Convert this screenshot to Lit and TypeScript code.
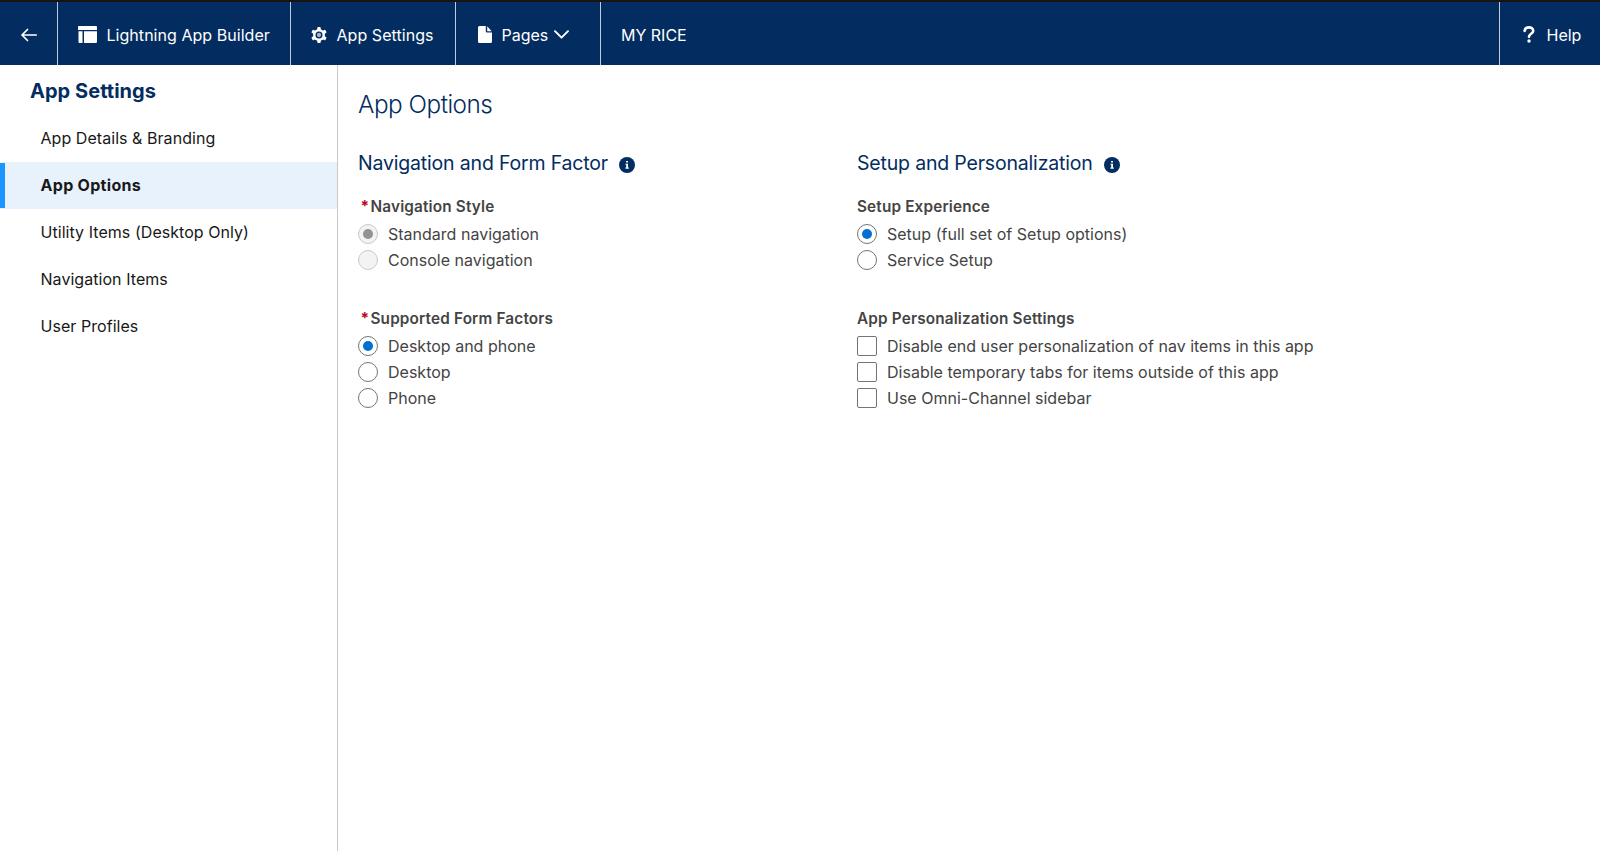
import { LitElement, html, css } from "lit";
import { customElement } from "lit/decorators.js";

interface Choice { label: string; checked?: boolean; disabled?: boolean }

@customElement("info-badge")
class InfoBadge extends LitElement {
  static styles = css`:host{display:block;width:16px;height:16px} svg{display:block}`;
  render() {
    return html`<svg width="16" height="16" viewBox="0 0 16 16"><circle cx="8" cy="8" r="8" fill="#032d60"/><path d="M7.1 3.9h1.900v1.700H7.100zM6.500 6.700h2.500v3.900h.8v1.100H6.400v-1.100h.8V7.800h-.7z" fill="#fff"/></svg>`;
  }
}

@customElement("choice-group")
class ChoiceGroup extends LitElement {
  static properties = { label: {}, required: { type: Boolean }, kind: {}, choices: { attribute: false } };
  declare label: string; declare required: boolean; declare kind: string; declare choices: Choice[];
  static styles = css`
    :host{display:block;height:112px;color:#444}
    .label{display:flex;height:25.5px;line-height:24px;font-size:15.3px;font-weight:600;letter-spacing:.17px;white-space:nowrap}
    .star{padding-left:2.5px;width:10px;color:#ba0517;font-weight:700}
    .row{display:flex;align-items:center;gap:10px;height:26.3px;font-size:16px;letter-spacing:.01px;white-space:nowrap}
    .mark{box-sizing:border-box;width:20px;height:20px;border:1px solid #747474;background:#fff;display:flex;align-items:center;justify-content:center}
    .radio{border-radius:50%}
    .checkbox{border-radius:2px}
    .dot{width:10px;height:10px;border-radius:50%;background:#0070d2}
    .off{background:#f3f3f3;border-color:#c9c9c9}
    .off .dot{background:#939393}
  `;
  render() {
    return html`<div class="label">${this.required ? html`<span class="star">*</span>` : ""}<span>${this.label}</span></div>
      ${this.choices.map(c => html`<div class="row"><span class="mark ${this.kind} ${c.disabled ? "off" : ""}">${c.checked ? html`<span class="dot"></span>` : ""}</span><span>${c.label}</span></div>`)}`;
  }
}

@customElement("app-root")
class AppRoot extends LitElement {
  static styles = css`
    :host{display:flex;flex-direction:column;height:851px;overflow:hidden;background:#fff;font-family:Inter,sans-serif;color:#181818}
    .bar{box-sizing:border-box;height:65px;border-top:2px solid #151515;background:#032d60;color:#fff;display:flex;font-size:16px;line-height:24px}
    .cell{box-sizing:border-box;display:flex;align-items:center;border-right:1px solid #c3cad4;white-space:nowrap;padding-top:2px}
    .back{width:57.5px;padding-left:20px}
    .builder{width:233px;padding-left:20px;gap:10px;letter-spacing:.04px}
    .settings{width:165px;padding-left:20.5px;gap:9.5px;letter-spacing:.06px}
    .pages{width:145px;padding-left:22px;gap:10px}
    .chevron{margin-left:-4px}
    .name{flex:1;padding-left:20.5px}
    .help{width:100px;padding-left:23px;gap:11.500px;border:0}
    .body{flex:1;display:flex;min-height:0}
    .side{box-sizing:border-box;width:337.500px;border-right:1px solid #c9c9c9}
    .title{height:50px;line-height:52px;padding-left:30px;font-size:20px;letter-spacing:.04px;font-weight:700;color:#032d60}
    .item{box-sizing:border-box;height:47px;line-height:47px;padding-left:40.5px;font-size:16px;letter-spacing:.05px}
    .on{background:#e8f2fc;font-weight:700;display:flex;align-items:center;padding-left:0;letter-spacing:.3px}
    .on::before{content:"";width:5px;height:45px;background:#1b96ff;margin-right:35.5px}
    .main{flex:1;padding:0 0 0 20.500px;color:#032d60}
    .heading{font-size:24.3px;font-weight:350;letter-spacing:-.48px;height:79px;line-height:78px}
    .cols{display:grid;grid-template-columns:499px 1fr}
    .section{display:flex;align-items:center;gap:11px;height:37px;font-size:19.500px;letter-spacing:-.18px;margin-bottom:14px}
    .section info-badge{margin-top:4px}
  `;
  render() {
    const items = ["App Details & Branding", "App Options", "Utility Items (Desktop Only)", "Navigation Items", "User Profiles"];
    return html`
      <div class="bar">
        <div class="cell back"><svg width="18" height="14" viewBox="0 0 18 14" fill="none" stroke="#fff" stroke-width="1.7" stroke-linecap="round" stroke-linejoin="round"><path d="M16.200 7H2M7.500 1.500 2 7l5.500 5.500"/></svg></div>
        <div class="cell builder"><svg width="19" height="17" viewBox="0 0 19 17" fill="#fff"><path d="M1 0h17a1 1 0 0 1 1 1v3H0V1a1 1 0 0 1 1-1zM.5 5.300h4V17H1.500a1 1 0 0 1-1-1zM6 5.300h13V16a1 1 0 0 1-1 1H6z"/></svg><span>Lightning App Builder</span></div>
        <div class="cell settings"><svg width="16" height="16" viewBox="-8.200 -8.200 16.400 16.400"><g fill="#fff"><circle r="6.100"/><rect x="-1.800" y="-8.200" width="3.600" height="16.400" rx="1"/><rect x="-1.800" y="-8.200" width="3.600" height="16.400" rx="1" transform="rotate(60)"/><rect x="-1.800" y="-8.200" width="3.600" height="16.400" rx="1" transform="rotate(120)"/></g><circle r="2.900" fill="#aab6c7" stroke="#032d60" stroke-width="1.400"/></svg><span>App Settings</span></div>
        <div class="cell pages"><svg width="14" height="17" viewBox="0 0 14 17" fill="#fff"><path d="M1.500 0H7.800v5.300A1.300 1.300 0 0 0 9.100 6.600H14V15.500A1.500 1.500 0 0 1 12.500 17H1.500A1.500 1.500 0 0 1 0 15.500v-14A1.500 1.500 0 0 1 1.500 0zM9.200.3 13.700 5.200H9.200z"/></svg><span>Pages</span><svg class="chevron" width="15" height="9" viewBox="0 0 15 9" fill="none" stroke="#fff" stroke-width="1.900" stroke-linecap="round" stroke-linejoin="round"><path d="M1 1.200 7.500 7.700 14 1.200"/></svg></div>
        <div class="cell name"><span>MY RICE</span></div>
        <div class="cell help"><svg width="12" height="17" viewBox="0 0 12 17" fill="none" stroke="#fff" stroke-width="2.600" stroke-linecap="round"><path d="M1.600 4.900C1.800 2.800 3.500 1.400 5.900 1.400s4.300 1.400 4.300 3.500c0 2.900-4.200 2.900-4.200 5.800"/><circle cx="6" cy="15" r="1.700" fill="#fff" stroke="none"/></svg><span>Help</span></div>
      </div>
      <div class="body">
        <div class="side"><div class="title">App Settings</div>${items.map((t, i) => html`<div class="item ${i === 1 ? "on" : ""}">${t}</div>`)}</div>
        <div class="main">
          <div class="heading">App Options</div>
          <div class="cols">
            <div>
              <div class="section"><span>Navigation and Form Factor</span><info-badge></info-badge></div>
              <choice-group label="Navigation Style" required kind="radio" .choices=${[{ label: "Standard navigation", checked: true, disabled: true }, { label: "Console navigation", disabled: true }]}></choice-group>
              <choice-group label="Supported Form Factors" required kind="radio" .choices=${[{ label: "Desktop and phone", checked: true }, { label: "Desktop" }, { label: "Phone" }]}></choice-group>
            </div>
            <div>
              <div class="section"><span>Setup and Personalization</span><info-badge></info-badge></div>
              <choice-group label="Setup Experience" kind="radio" .choices=${[{ label: "Setup (full set of Setup options)", checked: true }, { label: "Service Setup" }]}></choice-group>
              <choice-group label="App Personalization Settings" kind="checkbox" .choices=${[{ label: "Disable end user personalization of nav items in this app" }, { label: "Disable temporary tabs for items outside of this app" }, { label: "Use Omni-Channel sidebar" }]}></choice-group>
            </div>
          </div>
        </div>
      </div>`;
  }
}
